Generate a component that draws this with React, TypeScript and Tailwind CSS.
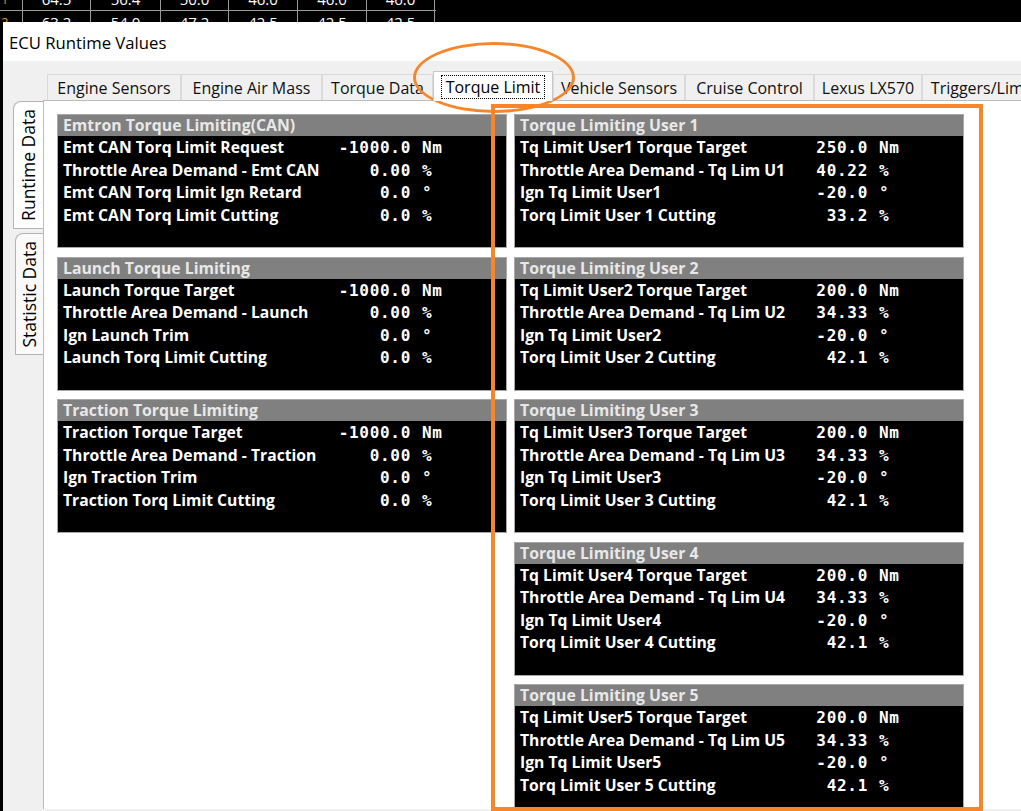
import * as React from "react";

type Row = [string, string, string];
interface PanelData {
    title: string;
    rows: Row[];
}

// ─── Data ────────────────────────────────────────────────────────────────────
const leftPanels: PanelData[] = [
    {
        title: "Emtron Torque Limiting(CAN)",
        rows: [
            ["Emt CAN Torq Limit Request", "-1000.0", "Nm"],
            ["Throttle Area Demand - Emt CAN", "0.00", "%"],
            ["Emt CAN Torq Limit Ign Retard", "0.0", "°"],
            ["Emt CAN Torq Limit Cutting", "0.0", "%"],
        ],
    },
    {
        title: "Launch Torque Limiting",
        rows: [
            ["Launch Torque Target", "-1000.0", "Nm"],
            ["Throttle Area Demand - Launch", "0.00", "%"],
            ["Ign Launch Trim", "0.0", "°"],
            ["Launch Torq Limit Cutting", "0.0", "%"],
        ],
    },
    {
        title: "Traction Torque Limiting",
        rows: [
            ["Traction Torque Target", "-1000.0", "Nm"],
            ["Throttle Area Demand - Traction", "0.00", "%"],
            ["Ign Traction Trim", "0.0", "°"],
            ["Traction Torq Limit Cutting", "0.0", "%"],
        ],
    },
];

function userPanel(n: number, target: string, demand: string, cut: string): PanelData {
    return {
        title: `Torque Limiting User ${n}`,
        rows: [
            [`Tq Limit User${n} Torque Target`, target, "Nm"],
            [`Throttle Area Demand - Tq Lim U${n}`, demand, "%"],
            [`Ign Tq Limit User${n}`, "-20.0", "°"],
            [`Torq Limit User ${n} Cutting`, cut, "%"],
        ],
    };
}

const rightPanels: PanelData[] = [
    userPanel(1, "250.0", "40.22", "33.2"),
    userPanel(2, "200.0", "34.33", "42.1"),
    userPanel(3, "200.0", "34.33", "42.1"),
    userPanel(4, "200.0", "34.33", "42.1"),
    userPanel(5, "200.0", "34.33", "42.1"),
];

const tabs: { label: string; w: string; active?: boolean }[] = [
    { label: "Engine Sensors", w: "w-[134px]" },
    { label: "Engine Air Mass", w: "w-[141px]" },
    { label: "Torque Data", w: "w-[111px]" },
    { label: "Torque Limit", w: "w-[120px]", active: true },
    { label: "Vehicle Sensors", w: "w-[132px]" },
    { label: "Cruise Control", w: "w-[129px]" },
    { label: "Lexus LX570", w: "w-[108px]" },
    { label: "Triggers/Limits", w: "w-[128px]" },
];

const gridRows = [
    ["64.5", "56.4", "50.0", "46.0", "46.0", "46.0"],
    ["63.2", "54.0", "47.2", "42.5", "42.5", "42.5"],
];
const gridWidths = ["w-[68px]", "w-[70px]", "w-[68px]", "w-[69px]", "w-[69px]", "w-[68px]"];

// ─── Background table peeking above the window ───────────────────────────────
function BackgroundGrid() {
    return (
        <div className="h-[22px] shrink-0 overflow-hidden bg-black">
            <div className="-mt-[12px]">
                {gridRows.map((r, i) => (
                    <div key={i} className="flex h-[23px] border-b border-[#9a9a9a] w-[436px]">
                        <div className="w-[23px] shrink-0 border-r border-[#9a9a9a] text-[#e08a2a] text-[13px] font-['Open_Sans',sans-serif] leading-[22px] pl-[1px]">
                            {i + 1}
                        </div>
                        {r.map((v, j) => (
                            <div
                                key={j}
                                className={`${gridWidths[j]} shrink-0 border-r border-[#9a9a9a] text-center text-white text-[15px] leading-[22px] font-['Open_Sans',sans-serif]`}
                            >
                                {v}
                            </div>
                        ))}
                    </div>
                ))}
            </div>
        </div>
    );
}

// ─── Value panel ─────────────────────────────────────────────────────────────
function Panel({ data }: { data: PanelData }) {
    return (
        <div className="h-[134px] w-[450px] shrink-0 border border-[#a8a8a8] bg-black flex flex-col">
            <div className="h-[21px] shrink-0 bg-[#808080] pl-[5px] text-[#e8e8e8] text-[15.8px] font-bold leading-[21px] font-['Open_Sans',sans-serif] whitespace-nowrap">
                {data.title}
            </div>
            <div className="flex flex-col pt-[1px]">
                {data.rows.map(([label, value, unit], i) => (
                    <div key={i} className="flex h-[22.5px] shrink-0 items-center whitespace-nowrap text-white">
                        <div className="flex w-[353px] justify-between pl-[5px]">
                            <span className="text-[15.7px] font-bold font-['Open_Sans',sans-serif]">{label}</span>
                            <span className="text-[16px] font-bold tracking-[0.7px] font-['DejaVu_Sans_Mono',monospace]">
                                {value}
                            </span>
                        </div>
                        <span className="ml-[11px] text-[16px] font-bold tracking-[0.7px] font-['DejaVu_Sans_Mono',monospace]">
                            {unit}
                        </span>
                    </div>
                ))}
            </div>
        </div>
    );
}

// ─── Page ────────────────────────────────────────────────────────────────────
export default function App() {
    return (
        <div className="relative w-[1021px] h-[811px] overflow-hidden bg-black font-['Open_Sans',sans-serif] flex flex-col">
            <BackgroundGrid />

            <div className="flex h-[789px] shrink-0">
                <div className="w-[3px] shrink-0 bg-black" />
                <div className="flex-1 min-w-0 flex flex-col bg-[#f0f0f0] overflow-hidden pb-[2px]">
                    {/* Title bar */}
                    <div className="h-[39px] shrink-0 bg-white pl-[6px] pt-[3px] flex items-center text-[16.7px] text-black">
                        ECU Runtime Values
                    </div>

                    {/* Horizontal tabs */}
                    <div className="h-[39px] shrink-0 flex items-end pl-[44px] whitespace-nowrap">
                        {tabs.map((t) =>
                            t.active ? (
                                <div
                                    key={t.label}
                                    className={`${t.w} shrink-0 relative z-10 -mb-px h-[30px] bg-white border border-b-0 border-[#c8c8c8] flex items-center justify-center text-[16px] text-black`}
                                >
                                    <span className="border border-dotted border-black px-[4px] leading-[22px]">{t.label}</span>
                                </div>
                            ) : (
                                <div
                                    key={t.label}
                                    className={`${t.w} shrink-0 h-[26px] bg-[#f0f0f0] border border-b-0 border-[#dadada] flex items-center justify-center text-[16px] text-[#111]`}
                                >
                                    {t.label}
                                </div>
                            )
                        )}
                    </div>

                    {/* Body: vertical tabs + pane */}
                    <div className="flex-1 min-h-0 flex">
                        <div className="w-[40px] shrink-0 flex flex-col items-end pt-[1px]">
                            <div className="w-[30px] h-[128px] bg-white border border-r-0 border-[#b4b4b4] rounded-tl-[8px] flex items-center justify-center">
                                <span className="[writing-mode:vertical-rl] rotate-180 text-[17.5px] text-black whitespace-nowrap">
                                    Runtime Data
                                </span>
                            </div>
                            <div className="mt-[4px] w-[28px] h-[122px] bg-[#fafafa] border border-r-0 border-[#b4b4b4] rounded-tl-[8px] flex items-center justify-center">
                                <span className="[writing-mode:vertical-rl] rotate-180 text-[17.5px] text-black whitespace-nowrap">
                                    Statistic Data
                                </span>
                            </div>
                        </div>

                        <div className="flex-1 min-w-0 overflow-hidden bg-white border-l border-t border-[#bcbcbc] pl-[13px] pt-[13px] flex gap-[7px]">
                            <div className="flex flex-col gap-[8.5px]">
                                {leftPanels.map((p) => (
                                    <Panel key={p.title} data={p} />
                                ))}
                            </div>
                            <div className="flex flex-col gap-[8.5px]">
                                {rightPanels.map((p) => (
                                    <Panel key={p.title} data={p} />
                                ))}
                            </div>
                        </div>
                    </div>
                </div>
            </div>

            {/* Orange annotations */}
            <div className="absolute left-[413px] top-[42px] w-[162px] h-[71px] rounded-[50%] border-[3px] border-[#f7862a]" />
            <div className="absolute left-[491px] top-[104px] w-[492px] h-[707px] border-[4px] border-[#f7862a]" />
        </div>
    );
}
